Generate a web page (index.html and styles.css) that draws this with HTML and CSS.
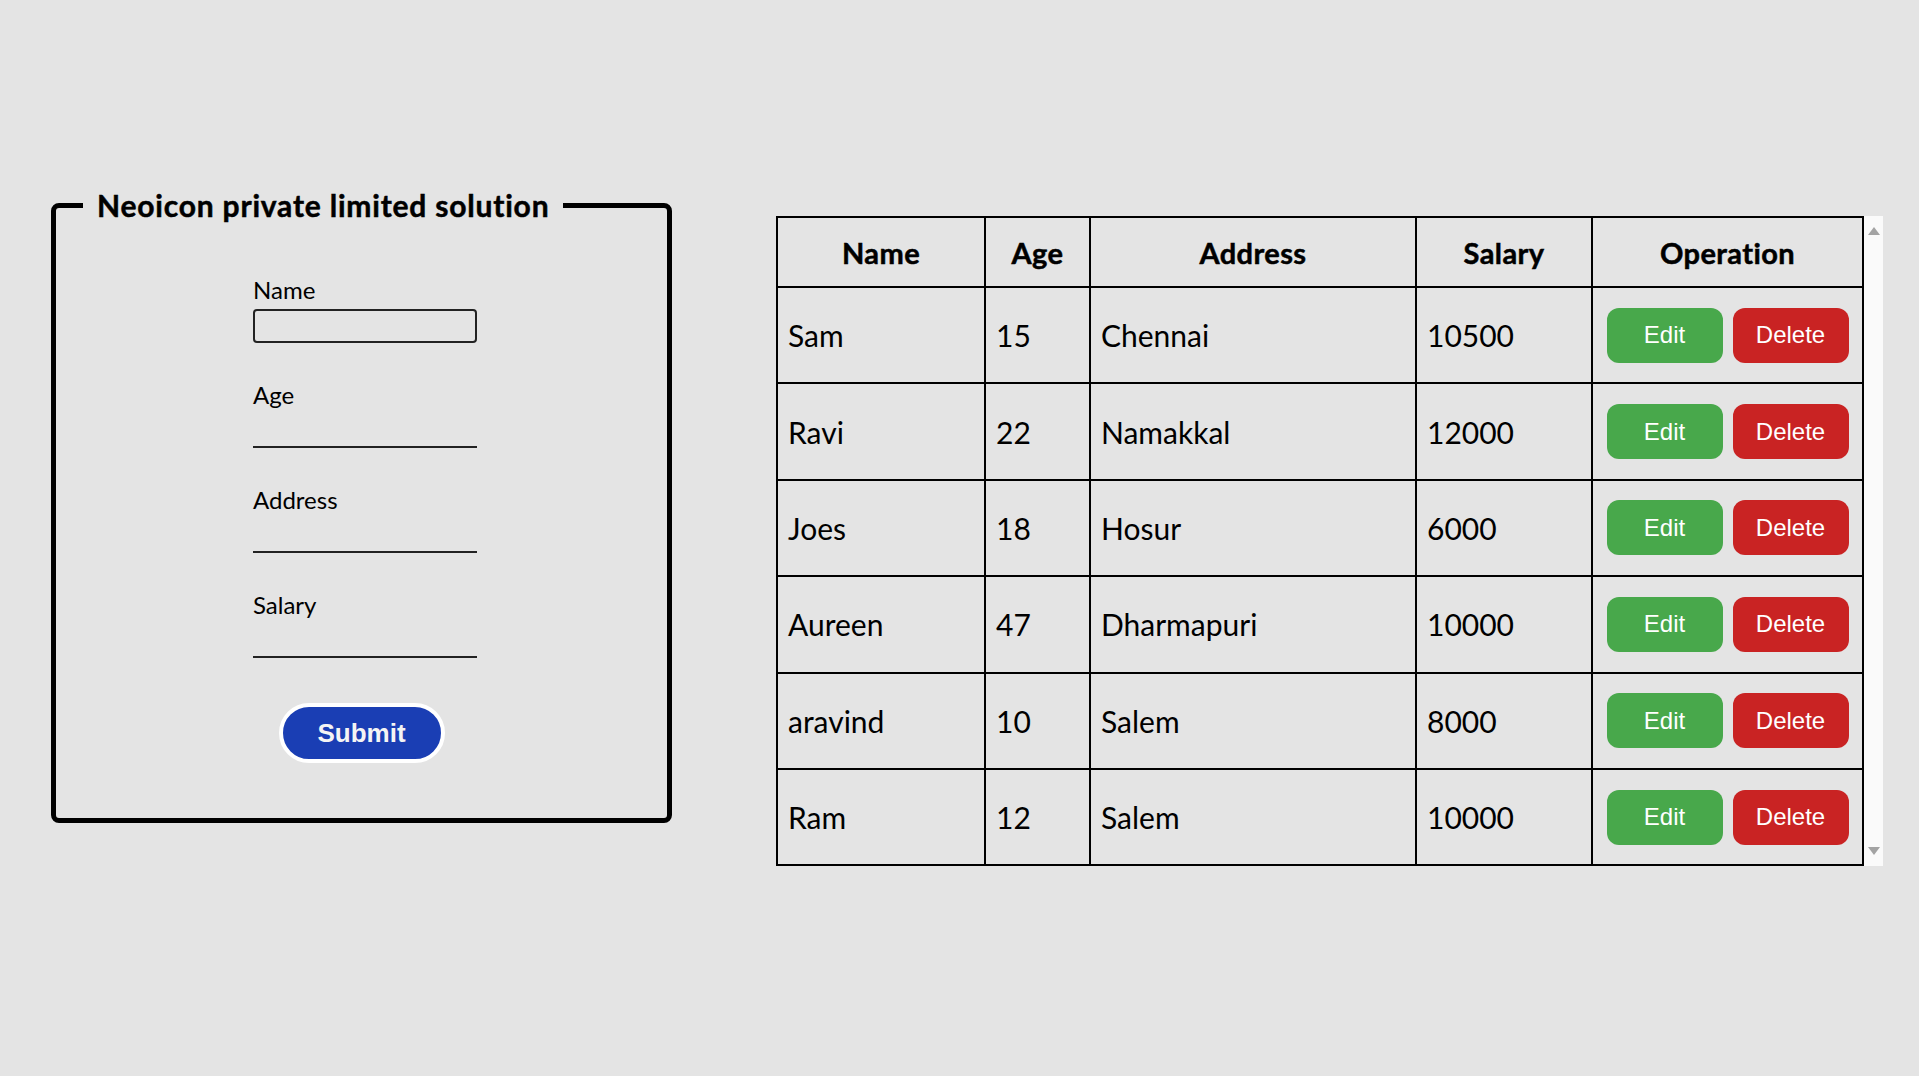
FILE: index.html
```html
<!DOCTYPE html>
<html lang="en">
<head>
<meta charset="utf-8">
<title>Neoicon</title>
<link rel="stylesheet" href="styles.css">
</head>
<body>
<div class="page">
  <fieldset class="card">
    <legend class="card-title">Neoicon private limited solution</legend>
    <form class="form">
      <div class="field">
        <label class="field-label">Name</label>
        <input class="field-input boxed" type="text">
      </div>
      <div class="field">
        <label class="field-label">Age</label>
        <input class="field-input" type="text">
      </div>
      <div class="field">
        <label class="field-label">Address</label>
        <input class="field-input" type="text">
      </div>
      <div class="field last">
        <label class="field-label">Salary</label>
        <input class="field-input" type="text">
      </div>
      <button class="submit" type="button">Submit</button>
    </form>
  </fieldset>

  <div class="table-wrap">
    <table class="grid">
      <colgroup>
        <col class="c-name"><col class="c-age"><col class="c-addr"><col class="c-sal"><col class="c-op">
      </colgroup>
      <thead>
        <tr class="head-row"><th>Name</th><th>Age</th><th>Address</th><th>Salary</th><th>Operation</th></tr>
      </thead>
      <tbody>
        <tr><td>Sam</td><td>15</td><td>Chennai</td><td>10500</td><td><div class="ops"><button class="btn edit">Edit</button><button class="btn del">Delete</button></div></td></tr>
        <tr><td>Ravi</td><td>22</td><td>Namakkal</td><td>12000</td><td><div class="ops"><button class="btn edit">Edit</button><button class="btn del">Delete</button></div></td></tr>
        <tr><td>Joes</td><td>18</td><td>Hosur</td><td>6000</td><td><div class="ops"><button class="btn edit">Edit</button><button class="btn del">Delete</button></div></td></tr>
        <tr><td>Aureen</td><td>47</td><td>Dharmapuri</td><td>10000</td><td><div class="ops"><button class="btn edit">Edit</button><button class="btn del">Delete</button></div></td></tr>
        <tr><td>aravind</td><td>10</td><td>Salem</td><td>8000</td><td><div class="ops"><button class="btn edit">Edit</button><button class="btn del">Delete</button></div></td></tr>
        <tr><td>Ram</td><td>12</td><td>Salem</td><td>10000</td><td><div class="ops"><button class="btn edit">Edit</button><button class="btn del">Delete</button></div></td></tr>
      </tbody>
    </table>
    <div class="scroll-track" aria-hidden="true">
      <span class="arrow up"></span>
      <span class="arrow down"></span>
    </div>
  </div>
</div>
</body>
</html>
```

FILE: styles.css
```css
html, body {
  margin: 0;
  padding: 0;
  background: #e4e4e4;
  color: #000;
  font-family: Lato, "Open Sans", sans-serif;
}

.page {
  display: flex;
  align-items: flex-start;
  gap: 104px;
  padding: 187px 0 0 51px;
}

/* ---------- form card ---------- */
.card {
  box-sizing: border-box;
  width: 621px;
  height: 636px;
  margin: 0;
  padding: 0 27px;
  border: 5px solid #000;
  border-radius: 8px;
  min-width: 0;
}

.card-title {
  padding: 0 14px;
  font-family: Lato, sans-serif;
  font-weight: 700;
  font-size: 30px;
  line-height: 36px;
  letter-spacing: 0.8px;
  -webkit-text-stroke: 0.5px #000;
}

.form {
  display: flex;
  flex-direction: column;
  align-items: center;
  padding-top: 54px;
}

.field {
  width: 224px;
  margin: 0 0 39px 7px;
}

.field.last {
  margin-bottom: 45px;
}

.field-label {
  display: block;
  font-size: 24px;
  line-height: 26px;
}

.field-input {
  display: block;
  box-sizing: border-box;
  width: 224px;
  height: 34px;
  margin: 6px 0 0;
  padding: 0 6px;
  background: transparent;
  border: none;
  border-bottom: 2px solid #222;
  outline: none;
  font: 20px Lato, sans-serif;
}

.field-input.boxed {
  border: 2px solid #222;
  border-radius: 4px;
}

.submit {
  box-sizing: border-box;
  width: 166px;
  height: 60px;
  border: 4px solid #fff;
  border-radius: 30px;
  background: #1a3eb4;
  color: #f4f4f4;
  font-family: "Liberation Sans", Arial, sans-serif;
  font-weight: 700;
  font-size: 26px;
  cursor: pointer;
}

/* ---------- table ---------- */
.table-wrap {
  display: flex;
  align-items: stretch;
  margin-top: 29px;
  width: 1107px;
}

.scroll-track {
  display: flex;
  flex-direction: column;
  justify-content: space-between;
  align-items: center;
  width: 19px;
  background: #fafafa;
}

.arrow {
  display: block;
  width: 0;
  height: 0;
  border-left: 6px solid transparent;
  border-right: 6px solid transparent;
}

.arrow.up {
  margin-top: 11px;
  border-bottom: 8px solid #a3a3a3;
}

.arrow.down {
  margin-bottom: 11px;
  border-top: 8px solid #a3a3a3;
}

.grid {
  flex: none;
  border-collapse: collapse;
  table-layout: fixed;
  width: 1088px;
}

.c-name { width: 208px; }
.c-age { width: 105px; }
.c-addr { width: 326px; }
.c-sal { width: 176px; }
.c-op { width: 271px; }

.grid th,
.grid td {
  border: 2px solid #000;
  padding: 0 10px;
  text-align: left;
  vertical-align: middle;
}

.grid th {
  height: 68px;
  text-align: center;
  font-weight: 700;
  font-size: 29px;
  letter-spacing: 0.4px;
  -webkit-text-stroke: 0.5px #000;
}

.grid td {
  height: 94.4px;
  font-size: 30px;
}

.ops {
  display: flex;
  justify-content: center;
  gap: 10px;
}

.btn {
  width: 116px;
  height: 55px;
  border: none;
  border-radius: 12px;
  color: #fff;
  font-family: "Liberation Sans", Arial, sans-serif;
  font-size: 24px;
  cursor: pointer;
}

.btn.edit { background: #48a84b; }
.btn.del { background: #c92323; }
```
